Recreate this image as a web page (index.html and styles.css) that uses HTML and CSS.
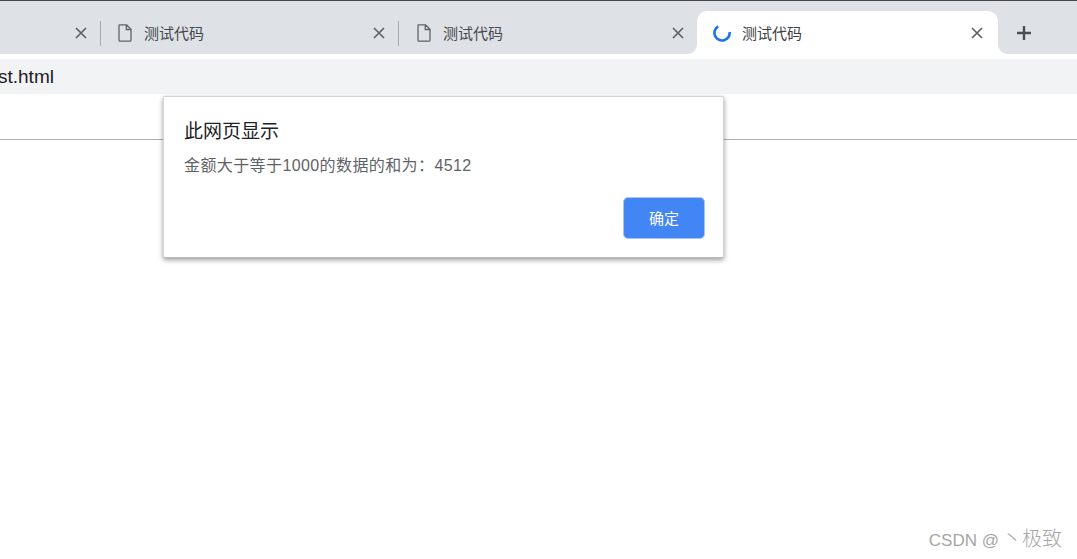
FILE: index.html
```html
<!DOCTYPE html>
<html lang="zh-CN">
<head>
    <meta charset="UTF-8">
    <title>测试代码</title>
    <link rel="stylesheet" href="styles.css">
</head>
<body>
    <div class="tab-strip">
        <div class="tab tab-first">
            <svg class="tab-close" viewBox="0 0 12 12"><path d="M1 1L11 11M11 1L1 11"/></svg>
        </div>
        <div class="tab">
            <svg class="file-icon" viewBox="0 0 14 18"><path d="M1 1.5C1 1 1.4.8 1.8.8H8.6L13 5.2V16.2C13 16.8 12.6 17.2 12 17.2H2C1.4 17.2 1 16.8 1 16.2ZM8.3 1V5.5H13"/></svg>
            <span class="tab-title">测试代码</span>
            <svg class="tab-close" viewBox="0 0 12 12"><path d="M1 1L11 11M11 1L1 11"/></svg>
        </div>
        <div class="tab tab-before-active">
            <svg class="file-icon" viewBox="0 0 14 18"><path d="M1 1.5C1 1 1.4.8 1.8.8H8.6L13 5.2V16.2C13 16.8 12.6 17.2 12 17.2H2C1.4 17.2 1 16.8 1 16.2ZM8.3 1V5.5H13"/></svg>
            <span class="tab-title">测试代码</span>
            <svg class="tab-close" viewBox="0 0 12 12"><path d="M1 1L11 11M11 1L1 11"/></svg>
        </div>
        <div class="tab tab-active">
            <svg class="spinner" viewBox="0 0 18 18"><path d="M5.2 2.3A7.6 7.6 0 1 0 16.6 8"/></svg>
            <span class="tab-title">测试代码</span>
            <svg class="tab-close" viewBox="0 0 12 12"><path d="M1 1L11 11M11 1L1 11"/></svg>
        </div>
        <svg class="new-tab" viewBox="0 0 16 16"><path d="M8 1V15M1 8H15"/></svg>
    </div>

    <div class="toolbar-gap"></div>
    <div class="address-bar">st.html</div>

    <div class="page">
        <div class="page-line"></div>
    </div>

    <div class="dialog">
        <h2>此网页显示</h2>
        <p>金额大于等于1000的数据的和为：4512</p>
        <div class="dialog-actions">
            <button>确定</button>
        </div>
    </div>

    <div class="watermark">CSDN @<span class="watermark-name">丶极致</span></div>
</body>
</html>
```

FILE: styles.css
```css
* {
    box-sizing: border-box;
    margin: 0;
    padding: 0;
}

html, body {
    height: 559px;
    overflow: hidden;
}

body {
    position: relative;
    background: white;
    font-family: "Liberation Sans", "Noto Sans CJK SC", sans-serif;
}

.tab-strip {
    display: flex;
    align-items: flex-start;
    height: 54px;
    padding-top: 10px;
    background: #dee1e6;
    border-top: 1px solid #45474a;
}

.tab {
    position: relative;
    display: flex;
    align-items: center;
    flex: none;
    width: 298px;
    height: 43px;
    padding: 0 14px 0 17px;
}

/* separator between inactive tabs */
.tab::after {
    content: "";
    position: absolute;
    right: 0;
    top: 10px;
    width: 1px;
    height: 25px;
    background: #a9abae;
}

.tab-first {
    width: 101px;
    justify-content: flex-end;
}

.tab-before-active {
    padding: 0 13px 0 18px;
}

.tab-before-active::after {
    display: none;
}

.tab-active {
    width: 301px;
    height: 48px;
    padding: 0 15px 5px 16px;
    background: white;
    border-radius: 10px 10px 0 0;
}

/* flared corners at the foot of the active tab */
.tab-active::before,
.tab-active::after {
    content: "";
    position: absolute;
    top: 33px;
    width: 10px;
    height: 10px;
    background: radial-gradient(circle at 0 0, #dee1e6 9.5px, white 10.5px);
}

.tab-active::before {
    left: -10px;
}

.tab-active::after {
    left: auto;
    right: -10px;
    background: radial-gradient(circle at 100% 0, #dee1e6 9.5px, white 10.5px);
}

.tab-title {
    flex: 1;
    margin-left: 12px;
    font-size: 15px;
    color: #45484c;
}

.tab-active .tab-title {
    margin-left: 11px;
    color: #3c4043;
}

.file-icon {
    width: 14px;
    height: 18px;
    fill: none;
    stroke: #5f6368;
    stroke-width: 1.3;
}

.tab-close {
    width: 12px;
    height: 12px;
    fill: none;
    stroke: #5f6368;
    stroke-width: 1.7;
}

.spinner {
    width: 18px;
    height: 18px;
    fill: none;
    stroke: #1a73e8;
    stroke-width: 2.6;
}

.new-tab {
    width: 16px;
    height: 16px;
    margin: 14px 0 0 18px;
    fill: none;
    stroke: #4b4e52;
    stroke-width: 2.4;
}

.toolbar-gap {
    height: 5px;
    background: white;
}

.address-bar {
    height: 35px;
    line-height: 35px;
    text-indent: -2px;
    background: #f1f3f4;
    font-size: 19px;
    color: #202124;
}

.page {
    padding-top: 45px;
}

.page-line {
    height: 1px;
    background: #aeaeae;
}

.dialog {
    position: absolute;
    left: 163px;
    top: 96px;
    width: 561px;
    height: 162px;
    padding: 24px 18px 20px 20px;
    background: white;
    border-radius: 2px;
    border: 1px solid #d3d3d3;
    border-bottom-color: #b9b9b9;
    box-shadow: 0 2px 5px rgba(0, 0, 0, 0.4);
}

.dialog h2 {
    font-size: 19px;
    line-height: 22px;
    font-weight: normal;
    color: #202124;
}

.dialog p {
    margin-top: 13px;
    font-size: 16px;
    line-height: 20px;
    letter-spacing: 0.4px;
    color: #5f6368;
}

.dialog-actions {
    display: flex;
    justify-content: flex-end;
    margin-top: 21px;
}

.dialog button {
    width: 82px;
    height: 42px;
    padding-bottom: 2px;
    border: 1px solid #a9c6fb;
    border-radius: 5px;
    background: #4285f4;
    color: white;
    font-family: inherit;
    font-size: 15px;
}

.watermark {
    position: absolute;
    right: 15px;
    top: 527px;
    font-size: 17px;
    line-height: 24px;
    color: #a6a6a6;
}

.watermark-name {
    margin-left: 3px;
    font-size: 20px;
    font-weight: 300;
}
```
